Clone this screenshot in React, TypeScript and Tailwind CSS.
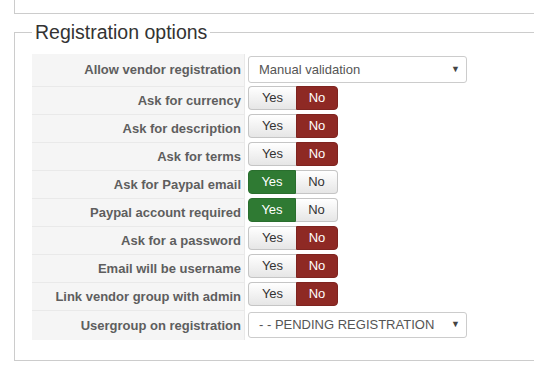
import React from "react";

type Row =
  | { label: string; kind: "select"; value: string }
  | { label: string; kind: "toggle"; yes: boolean };

const rows: Row[] = [
  { label: "Allow vendor registration", kind: "select", value: "Manual validation" },
  { label: "Ask for currency", kind: "toggle", yes: false },
  { label: "Ask for description", kind: "toggle", yes: false },
  { label: "Ask for terms", kind: "toggle", yes: false },
  { label: "Ask for Paypal email", kind: "toggle", yes: true },
  { label: "Paypal account required", kind: "toggle", yes: true },
  { label: "Ask for a password", kind: "toggle", yes: false },
  { label: "Email will be username", kind: "toggle", yes: false },
  { label: "Link vendor group with admin", kind: "toggle", yes: false },
  { label: "Usergroup on registration", kind: "select", value: "- - PENDING REGISTRATION" },
];

function Select({ value, h }: { value: string; h: string }) {
  return (
    <div
      className={`w-[219px] ${h} flex items-center justify-between pl-[10px] pr-[6px] bg-white border border-[#ccc] rounded-[3px] text-[13px] text-[#555]`}
    >
      <span>{value}</span>
      <span className="text-[9px] text-[#444]">▼</span>
    </div>
  );
}

function Toggle({ yes }: { yes: boolean }) {
  const plain = "bg-gradient-to-b from-white to-[#e6e6e6] text-[#333] border border-[#c5c5c5]";
  return (
    <div className="flex h-[24px] text-[13px]">
      <div
        className={`w-[48px] flex items-center justify-center rounded-l-[4px] ${
          yes ? "bg-[#2f7a33] text-white border border-[#2a6e2e]" : plain + " border-r-0"
        }`}
      >
        Yes
      </div>
      <div
        className={`w-[42px] flex items-center justify-center rounded-r-[4px] ${
          yes ? plain + " border-l-0" : "bg-[#8e2924] text-white border border-[#7e231f]"
        }`}
      >
        No
      </div>
    </div>
  );
}

export default function App() {
  return (
    <div className="w-[534px] h-[370px] overflow-hidden bg-white font-['Liberation_Sans',Arial,sans-serif]">
      <div className="ml-[14px] h-[14px] border-l border-b border-[#ccc]" />
      <fieldset className="ml-[14px] mt-[7px] h-[340px] border-l border-t border-b border-[#ccc] pl-[17px] pt-[11px]">
        <legend className="px-[3px] text-[19.5px] text-[#333] leading-[22px]">Registration options</legend>
        <div className="flex flex-col">
          {rows.map((r, i) => {
            const h = i === 0 ? "h-[32px]" : i === rows.length - 1 ? "h-[30px]" : "h-[28px]";
            return (
              <div key={r.label} className={`flex ${h}`}>
                <div
                  className={`w-[213px] flex items-center justify-end pr-[3px] bg-[#f5f5f5] border-r border-[#e9e9e9] text-[13px] font-bold text-[#5e5e5e] ${
                    i > 0 ? "border-t border-t-[#e9e9e9]" : ""
                  }`}
                >
                  {r.label}
                </div>
                <div className={`pl-[3px] ${r.kind === "select" ? "pt-[2px]" : ""}`}>
                  {r.kind === "select" ? (
                    <Select value={r.value} h={i === 0 ? "h-[27px]" : "h-[26px]"} />
                  ) : (
                    <Toggle yes={r.yes} />
                  )}
                </div>
              </div>
            );
          })}
        </div>
      </fieldset>
    </div>
  );
}
